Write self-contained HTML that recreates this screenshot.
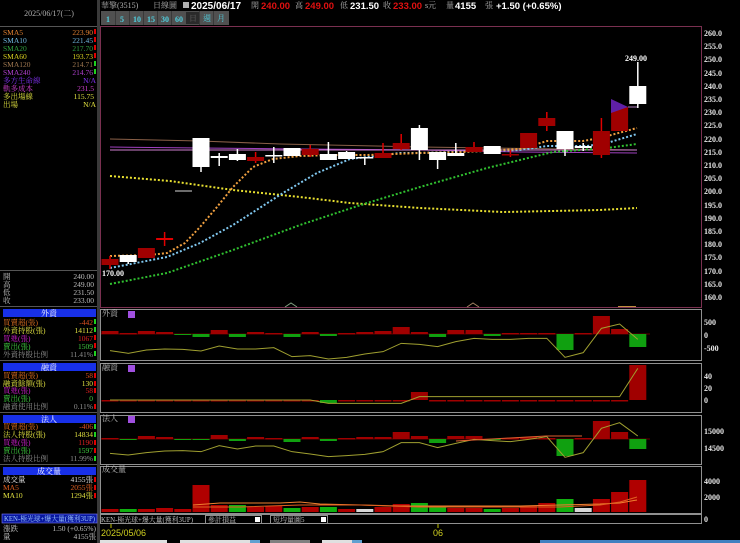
<!DOCTYPE html>
<html><head><meta charset="utf-8">
<style>
html,body{margin:0;padding:0;background:#000;width:740px;height:543px;overflow:hidden}
svg{display:block}
text{font-family:"Liberation Serif","Noto Serif CJK TC","Noto Sans CJK TC",serif;font-size:8px}
.l text{font-size:7.5px}
.b{font-family:"Liberation Sans","Noto Sans CJK TC",sans-serif;font-weight:bold}
</style></head><body>
<svg id="s" width="740" height="543" viewBox="0 0 740 543" xmlns="http://www.w3.org/2000/svg">
<rect width="740" height="543" fill="#000"/>
<rect x="97" y="0" width="3" height="543" fill="#3a3a3a"/>
<line x1="0" y1="26.5" x2="97" y2="26.5" stroke="#555"/>
<text x="49" y="16" fill="#b0b0b0" text-anchor="middle">2025/06/17(二)</text>
<g class="l">
<g text-anchor="start">
<text x="3" y="35" fill="#e08030">SMA5</text>
<text x="3" y="43" fill="#70b8e0">SMA10</text>
<text x="3" y="51" fill="#30a040">SMA20</text>
<text x="3" y="59" fill="#d8d020">SMA60</text>
<text x="3" y="67" fill="#a07850">SMA120</text>
<text x="3" y="75" fill="#b040d0">SMA240</text>
<text x="3" y="83" fill="#8030f0">多方生命線</text>
<text x="3" y="91" fill="#d040d0">軌多成本</text>
<text x="3" y="99" fill="#e0e040">多出場線</text>
<text x="3" y="107" fill="#e0e040">出場</text>
</g>
<g text-anchor="end">
<text x="93" y="35" fill="#e08030">223.90</text>
<text x="93" y="43" fill="#70b8e0">221.45</text>
<text x="93" y="51" fill="#30a040">217.70</text>
<text x="93" y="59" fill="#d8d020">193.73</text>
<text x="93" y="67" fill="#a07850">214.71</text>
<text x="93" y="75" fill="#b040d0">214.76</text>
<text x="96" y="83" fill="#8030f0">N/A</text>
<text x="94" y="91" fill="#d040d0">231.5</text>
<text x="94" y="99" fill="#e0e040">115.75</text>
<text x="96" y="107" fill="#e0e040">N/A</text>
</g>
<text x="3" y="279" fill="#c0c0c0">開</text><text x="94" y="279" fill="#c0c0c0" text-anchor="end">240.00</text>
<text x="3" y="287" fill="#c0c0c0">高</text><text x="94" y="287" fill="#c0c0c0" text-anchor="end">249.00</text>
<text x="3" y="295" fill="#c0c0c0">低</text><text x="94" y="295" fill="#c0c0c0" text-anchor="end">231.50</text>
<text x="3" y="303" fill="#c0c0c0">收</text><text x="94" y="303" fill="#c0c0c0" text-anchor="end">233.00</text>
<text x="3" y="325" fill="#e07020">買賣超(張)</text><text x="93" y="325" fill="#e05020" text-anchor="end">-442</text>
<text x="3" y="333" fill="#e0e040">外資持股(張)</text><text x="93" y="333" fill="#e0e040" text-anchor="end">14112</text>
<text x="3" y="341" fill="#d020d0">買進(張)</text><text x="93" y="341" fill="#e02020" text-anchor="end">1067</text>
<text x="3" y="349" fill="#40d040">賣出(張)</text><text x="93" y="349" fill="#40d040" text-anchor="end">1509</text>
<text x="3" y="357" fill="#909090">外資持股比例</text><text x="93" y="357" fill="#909090" text-anchor="end">11.41%</text>
<text x="3" y="378" fill="#e07020">買賣超(張)</text><text x="93" y="378" fill="#e05020" text-anchor="end">58</text>
<text x="3" y="386" fill="#e0e040">融資餘額(張)</text><text x="93" y="386" fill="#e0e040" text-anchor="end">130</text>
<text x="3" y="393" fill="#d020d0">買進(張)</text><text x="93" y="393" fill="#e02020" text-anchor="end">58</text>
<text x="3" y="401" fill="#40d040">賣出(張)</text><text x="93" y="401" fill="#40d040" text-anchor="end">0</text>
<text x="3" y="409" fill="#909090">融資使用比例</text><text x="93" y="409" fill="#909090" text-anchor="end">0.11%</text>
<text x="3" y="429" fill="#e07020">買賣超(張)</text><text x="93" y="429" fill="#e05020" text-anchor="end">-406</text>
<text x="3" y="437" fill="#e0e040">法人持股(張)</text><text x="93" y="437" fill="#e0e040" text-anchor="end">14834</text>
<text x="3" y="445" fill="#d020d0">買進(張)</text><text x="93" y="445" fill="#e02020" text-anchor="end">1190</text>
<text x="3" y="453" fill="#40d040">賣出(張)</text><text x="93" y="453" fill="#40d040" text-anchor="end">1597</text>
<text x="3" y="461" fill="#909090">法人持股比例</text><text x="93" y="461" fill="#909090" text-anchor="end">11.99%</text>
<text x="3" y="482" fill="#e0e0e0">成交量</text><text x="93" y="482" fill="#e0e0e0" text-anchor="end">4155張</text>
<text x="3" y="490" fill="#e06020">MA5</text><text x="93" y="490" fill="#e06020" text-anchor="end">2055張</text>
<text x="3" y="498" fill="#e0e040">MA10</text><text x="93" y="498" fill="#e0e040" text-anchor="end">1294張</text>
<text x="3" y="531" fill="#c0c0c0">漲跌</text><text x="96" y="531" fill="#c0c0c0" text-anchor="end">1.50 (+0.65%)</text>
<text x="3" y="539" fill="#c0c0c0">量</text><text x="96" y="539" fill="#c0c0c0" text-anchor="end">4155張</text>
</g>
<g fill="#e00000"><rect x="94" y="29" width="2" height="5"/><rect x="94" y="37" width="2" height="5"/><rect x="94" y="45" width="2" height="5"/><rect x="94" y="53" width="2" height="5"/></g>
<g fill="#20d020"><rect x="94" y="61" width="2" height="5"/><rect x="94" y="69" width="2" height="5"/></g>
<line x1="0" y1="270.5" x2="97" y2="270.5" stroke="#555"/>
<line x1="0" y1="306.5" x2="97" y2="306.5" stroke="#555"/>
<rect x="3" y="309" width="93" height="8" fill="#1830e8"/><text x="49" y="316" fill="#fff" text-anchor="middle">外資</text>
<line x1="0" y1="360.5" x2="97" y2="360.5" stroke="#555"/>
<rect x="3" y="363" width="93" height="8" fill="#1830e8"/><text x="49" y="370" fill="#fff" text-anchor="middle">融資</text>
<line x1="0" y1="412.5" x2="97" y2="412.5" stroke="#555"/>
<rect x="3" y="415" width="93" height="8" fill="#1830e8"/><text x="49" y="422" fill="#fff" text-anchor="middle">法人</text>
<line x1="0" y1="464.5" x2="97" y2="464.5" stroke="#555"/>
<rect x="3" y="467" width="93" height="8" fill="#1830e8"/><text x="49" y="474" fill="#fff" text-anchor="middle">成交量</text>
<g fill="#e00000"><rect x="94" y="319" width="2" height="5" fill="#20d020"/><rect x="94" y="327" width="2" height="5" fill="#20d020"/><rect x="94" y="335" width="2" height="5"/><rect x="94" y="343" width="2" height="5"/><rect x="94" y="351" width="2" height="5" fill="#20d020"/>
<rect x="94" y="373" width="2" height="5"/><rect x="94" y="381" width="2" height="5"/><rect x="94" y="388" width="2" height="5"/><rect x="94" y="404" width="2" height="5"/>
<rect x="94" y="424" width="2" height="5" fill="#20d020"/><rect x="94" y="432" width="2" height="5" fill="#20d020"/><rect x="94" y="440" width="2" height="5"/><rect x="94" y="448" width="2" height="5"/><rect x="94" y="456" width="2" height="5" fill="#20d020"/>
<rect x="94" y="477" width="2" height="5"/><rect x="94" y="485" width="2" height="5"/><rect x="94" y="493" width="2" height="5"/></g>
<rect x="2" y="514" width="95" height="9" fill="#0818a0" stroke="#8080ff" stroke-width="0.6"/>
<text x="4" y="521" fill="#a0c8ff" textLength="91" lengthAdjust="spacingAndGlyphs" style="font-size:7px">KEN-極光球+爆大量(獲利3UP)</text>

<text x="101" y="8" fill="#b0b0b0">華擎(3515)</text>
<text x="153" y="8" fill="#b0b0b0">日線圖</text>
<rect x="183" y="2" width="6" height="6" fill="#b0b0b0"/>
<text class="b" x="191" y="9" fill="#fff" style="font-size:10px">2025/06/17</text>
<text x="251" y="8" fill="#b0b0b0">開</text><text class="b" x="261" y="9" fill="#e01010" style="font-size:9.5px">240.00</text>
<text x="295" y="8" fill="#b0b0b0">高</text><text class="b" x="305" y="9" fill="#e01010" style="font-size:9.5px">249.00</text>
<text x="340" y="8" fill="#b0b0b0">低</text><text class="b" x="350" y="9" fill="#fff" style="font-size:9.5px">231.50</text>
<text x="383" y="8" fill="#b0b0b0">收</text><text class="b" x="393" y="9" fill="#e01010" style="font-size:9.5px">233.00</text>
<text x="425" y="8" fill="#b0b0b0">s元</text>
<text x="446" y="8" fill="#b0b0b0">量</text><text class="b" x="455" y="9" fill="#fff" style="font-size:9.5px">4155</text>
<text x="485" y="8" fill="#b0b0b0">張</text>
<text class="b" x="496" y="9" fill="#fff" style="font-size:9.5px">+1.50 (+0.65%)</text>
<rect x="101" y="11" width="128" height="14" fill="#505050"/>
<g stroke="#383838"><line x1="115.5" y1="11" x2="115.5" y2="25"/><line x1="129.5" y1="11" x2="129.5" y2="25"/><line x1="143.5" y1="11" x2="143.5" y2="25"/><line x1="157.5" y1="11" x2="157.5" y2="25"/><line x1="171.5" y1="11" x2="171.5" y2="25"/><line x1="199.5" y1="11" x2="199.5" y2="25"/><line x1="213.5" y1="11" x2="213.5" y2="25"/></g>
<rect x="186" y="12" width="13" height="12" fill="#2a2a2a"/>
<g fill="#50d0e0" class="b" text-anchor="middle" style="font-size:9px">
<text x="108" y="22">1</text><text x="122" y="22">5</text><text x="137" y="22">10</text><text x="151" y="22">15</text><text x="165" y="22">30</text><text x="179" y="22">60</text>
</g>
<text x="193" y="21" fill="#606060" text-anchor="middle">日</text>
<text x="207" y="21" fill="#50d0e0" text-anchor="middle">週</text>
<text x="221" y="21" fill="#50d0e0" text-anchor="middle">月</text>

<rect x="100.5" y="26.5" width="601" height="281" fill="none" stroke="#7a3050"/>
<rect x="100.5" y="309.5" width="601" height="51" fill="none" stroke="#909090"/>
<rect x="100.5" y="363.5" width="601" height="49" fill="none" stroke="#909090"/>
<rect x="100.5" y="415.5" width="601" height="49" fill="none" stroke="#909090"/>
<rect x="100.5" y="466.5" width="601" height="47" fill="none" stroke="#909090"/>
<rect x="100.5" y="514.5" width="601" height="9" fill="none" stroke="#909090"/>
<g id="g"></g>
<g class="b" fill="#e8e8e8" style="font-size:8.5px">
<text x="704" y="36">260.0</text><text x="704" y="49">255.0</text><text x="704" y="62">250.0</text><text x="704" y="76">245.0</text><text x="704" y="89">240.0</text><text x="704" y="102">235.0</text><text x="704" y="115">230.0</text><text x="704" y="128">225.0</text><text x="704" y="142">220.0</text><text x="704" y="155">215.0</text><text x="704" y="168">210.0</text><text x="704" y="181">205.0</text><text x="704" y="194">200.0</text><text x="704" y="208">195.0</text><text x="704" y="221">190.0</text><text x="704" y="234">185.0</text><text x="704" y="247">180.0</text><text x="704" y="260">175.0</text><text x="704" y="274">170.0</text><text x="704" y="287">165.0</text><text x="704" y="300">160.0</text>
<text x="704" y="325">500</text><text x="704" y="338">0</text><text x="704" y="351">-500</text>
<text x="704" y="379">40</text><text x="704" y="391">20</text><text x="704" y="403">0</text>
<text x="704" y="434">15000</text><text x="704" y="451">14500</text>
<text x="704" y="484">4000</text><text x="704" y="500">2000</text><text x="704" y="522">0</text>
<text x="625" y="61" fill="#fff">249.00</text>
<text x="102" y="276" fill="#fff">170.00</text>
</g>
<text x="102" y="316" fill="#c0c0c0">外資</text><rect x="128" y="311" width="7" height="7" fill="#a050e0"/>
<text x="102" y="370" fill="#c0c0c0">融資</text><rect x="128" y="365" width="7" height="7" fill="#a050e0"/>
<text x="102" y="421" fill="#c0c0c0">法人</text><rect x="128" y="416" width="7" height="7" fill="#a050e0"/>
<text x="102" y="472" fill="#c0c0c0">成交量</text>
<text x="101" y="522" fill="#c0c0c0" textLength="92" lengthAdjust="spacingAndGlyphs" style="font-size:7px">KEN-極光球+爆大量(獲利3UP)</text>
<rect x="205.5" y="515.5" width="56" height="8" fill="#000" stroke="#909090"/><text x="208" y="522" fill="#c0c0c0" style="font-size:7px">參計損益</text><rect x="255" y="517" width="5" height="5" fill="#fff"/>
<rect x="270.5" y="515.5" width="57" height="8" fill="#000" stroke="#909090"/><text x="273" y="522" fill="#c0c0c0" style="font-size:7px">短均量圖5</text><rect x="321" y="517" width="5" height="5" fill="#fff"/>
<line x1="111" y1="524" x2="111" y2="528" stroke="#c0c000"/><line x1="438" y1="524" x2="438" y2="528" stroke="#c0c000"/>
<text x="101" y="536" fill="#d0d020" style="font-family:'Liberation Sans',sans-serif;font-size:9px">2025/05/06</text>
<text x="433" y="536" fill="#d0d020" style="font-family:'Liberation Sans',sans-serif;font-size:9px">06</text>
<rect x="100" y="540" width="67" height="3" fill="#e0e0e0"/><rect x="180" y="540" width="70" height="3" fill="#e0e0e0"/><rect x="250" y="540" width="10" height="3" fill="#60a0d0"/>
<rect x="270" y="540" width="40" height="3" fill="#808080"/><rect x="322" y="540" width="30" height="3" fill="#e0e0e0"/><rect x="352" y="540" width="10" height="3" fill="#60a0d0"/>
<rect x="540" y="540" width="200" height="3" fill="#4080c0"/>
</svg>
<script>
var NS="http://www.w3.org/2000/svg",G=document.getElementById("g");
function el(t,a){var e=document.createElementNS(NS,t);for(var k in a)e.setAttribute(k,a[k]);G.appendChild(e);return e;}
function X(i){return 110+i*18.2;}
function pl(pts,c,d){el("polyline",{points:pts,fill:"none",stroke:c,"stroke-width":d?2:1,"stroke-dasharray":d?"2 2":"none"});}
pl("110,139 200,141 280,144 420,147 637,150","#8a6048",0);
pl("110,147 200,148 300,149 420,150 520,152 637,153","#a040c0",0);
pl("110,150 637,150","#d080d0",0);
pl("110,176 170,181 233,190 300,197 350,203 420,208 503,212 553,211 600,210 637,208","#e8e030",1);
pl("110,284 167,273 233,250 300,225 367,203 420,187 487,168 553,152 607,148 637,144","#30c030",1);
pl("110,268 167,257 200,243 233,225 283,193 317,173 350,159 400,153 420,153 520,150 547,146 587,146 607,143 637,134","#80c8f0",1);
pl("110,256 150,255 167,253 185,243 200,227 217,207 233,187 253,167 273,159 300,156 333,155 367,155 420,153 463,152 520,149 547,141 583,141 600,138 637,128","#f0a040",1);
el("line",{x1:175,y1:191,x2:192,y2:191,stroke:"#909090","stroke-width":1.5});
var C=[[259,265,256,269,"r"],[255,262,255,264,"w"],[248,258,248,258,"r"],[238,240,232,246,"x"],null,
[138,167,138,172,"w"],[156,158,153,166,"w"],[154,160,149,161,"w"],[157,161,152,163,"r"],[155,156,147,163,"w"],
[148,156,148,156,"w"],[149,155,145,157,"r"],[154,160,142,160,"w"],[152,159,151,159,"w"],[157,158,157,165,"w"],
[153,158,143,158,"r"],[143,149,134,150,"r"],[128,150,125,160,"w"],[152,160,152,169,"w"],[153,156,143,156,"w"],
[147,152,142,152,"r"],[146,154,146,154,"w"],[154,155,150,157,"r"],[133,148,133,148,"r"],[118,126,112,131,"r"],
[131,149,131,156,"w"],[146,148,143,151,"w"],[131,155,118,158,"r"],[107,131,107,131,"r"],[86,104,62,108,"w"]];
C.forEach(function(c,i){if(!c)return;var x=X(i);
 var wc=c[4]=="w"?"#fff":"#e00000";
 el("rect",{x:x-0.75,y:c[2],width:1.5,height:c[3]-c[2],fill:wc});
 var bc=c[4]=="w"?"#fff":(c[4]=="x"?"#e00000":"#a00000");
 el("rect",{x:x-8.5,y:c[0],width:17,height:Math.max(c[1]-c[0],1.5),fill:bc});
});
el("polygon",{points:"611,99 628,107 611,113",fill:"#6020a8"});
el("line",{x1:628,y1:107,x2:637,y2:107,stroke:"#b080c0"});
el("polyline",{points:"285,307 291,303 297,307",fill:"none",stroke:"#80a080"});
el("polyline",{points:"467,307 473,303 479,307",fill:"none",stroke:"#a08060"});
el("rect",{x:618,y:306,width:18,height:1,fill:"#c09040"});
function bars(vals,zero){vals.forEach(function(v,i){var x=X(i);
 if(v>=0)el("rect",{x:x-8.5,y:zero-v,width:17,height:Math.max(v,1.5),fill:"#a00000"});
 else el("rect",{x:x-8.5,y:zero,width:17,height:-v,fill:"#10a010"});});}
function line(zys,c){var p=zys.map(function(z,i){return X(i)+","+(300+z/3);}).join(" ");el("polyline",{points:p,fill:"none",stroke:c,"stroke-width":1});}
el("line",{x1:101,y1:334,x2:650,y2:334,stroke:"#600000"});
bars([3,1,3,2,-1,-3,4,-3,2,1,-3,2,-2,1,2,3,7,2,-3,4,4,-2,1,1,1,-16,1,18,5,-13],334);
line([152,160,150,147,148,153,138,147,147,143,170,167,177,172,162,155,130,133,140,125,115,118,118,115,115,172,158,85,72,118],"#a0a030");
bars([0,0,0,0,0,0,0,0,0,0,0,0,-3,0,0,0,0,8,0,0,0,0,0,0,0,0,0,0,0,35],400);
line([300,300,300,300,300,300,300,300,300,300,300,300,310,310,310,310,310,290,290,290,290,290,290,290,290,290,290,290,290,205],"#a0a030");
el("line",{x1:101,y1:439,x2:650,y2:439,stroke:"#600000"});
bars([1,-1,3,2,-1,-1,4,-2,2,1,-3,2,-2,1,2,2,7,3,-4,3,3,-1,1,2,1,-17,1,18,7,-10],439);
line([460,465,458,453,452,455,437,447,438,438,455,462,470,467,463,455,428,428,443,430,418,422,425,418,410,472,458,385,368,408],"#a0a030");
pl("456,441 474,440 492,439 510,438 528,437 546,436 582,436","#e06030",0);
var vh=[3,3,3,4,3,27,7,7,5,6,4,5,5,3,3,5,8,9,5,4,4,3,4,6,9,13,4,13,20,32];
var vc="rgrrrrrgrrgrgrwrrggrrgrrrgwrrr";
vh.forEach(function(h,i){var x=X(i);var c=vc[i]=="r"?"#b00000":(vc[i]=="g"?"#10b010":"#d8d8d8");
 el("rect",{x:x-8.5,y:512-h,width:17,height:h,fill:c});});
pl("193,505 220,503 280,503 300,502 320,504 400,506 460,506 520,506 560,505 600,504 620,503 637,500","#f08030",0);
pl("193,507 240,507 300,505 360,505 420,507 500,507 560,507 600,505 620,502 637,497","#e06020",0);
</script>
</body></html>
